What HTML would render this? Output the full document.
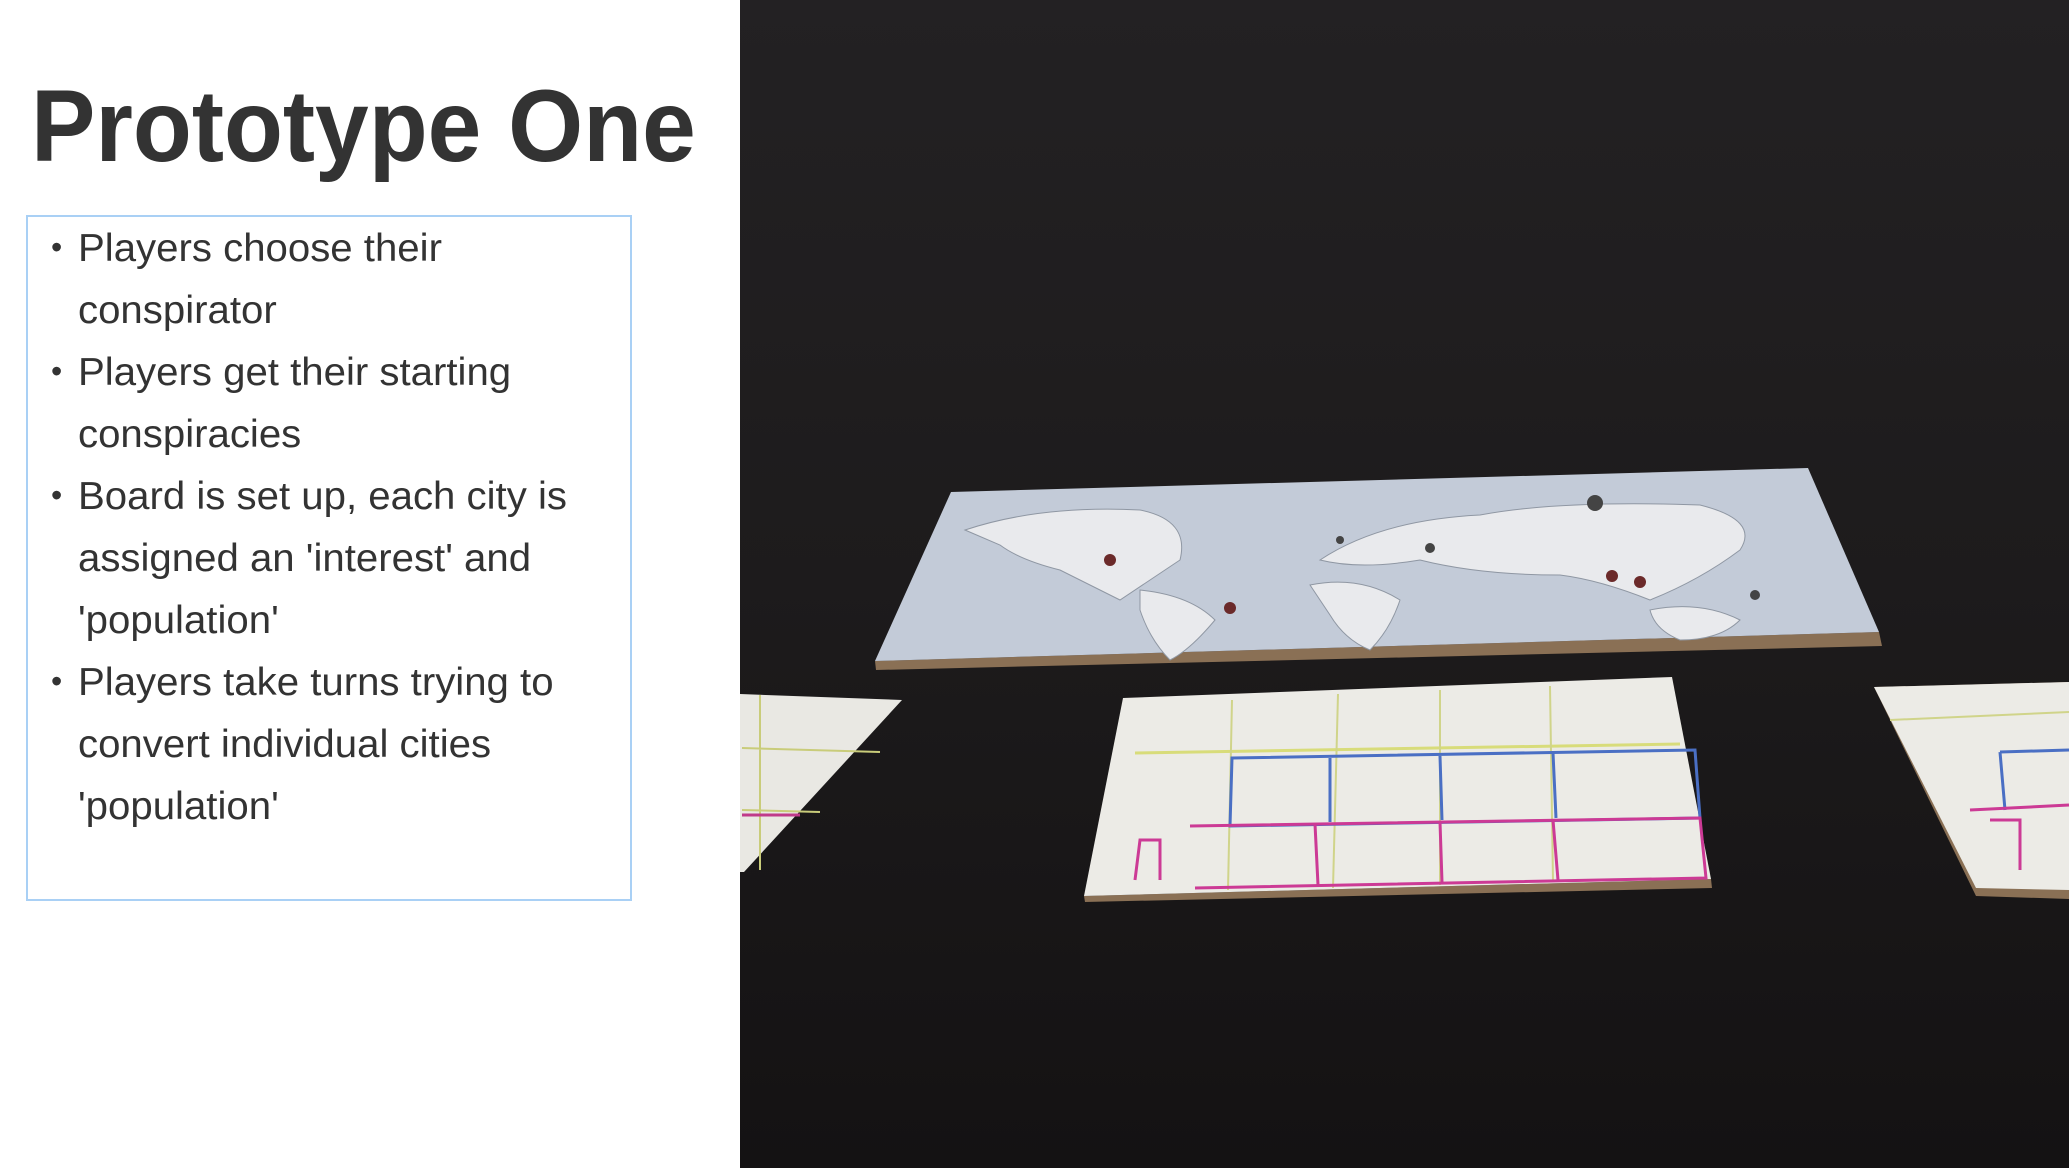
<!DOCTYPE html>
<html><head><meta charset="utf-8"><style>
html,body{margin:0;padding:0;width:2072px;height:1168px;overflow:hidden;background:#fff;font-family:"Liberation Sans",Arial,sans-serif;}
.title{position:absolute;left:31px;top:66px;font-size:102px;font-weight:bold;color:#333;line-height:120px;white-space:nowrap;transform-origin:0 0;transform:scaleX(0.946);}
.box{position:absolute;left:26px;top:215px;width:606px;height:686px;border:2px solid #a9d0f5;box-sizing:border-box;}
.txt{position:absolute;left:78px;top:0;color:#333;font-size:39px;line-height:62px;white-space:nowrap;transform-origin:0 0;transform:scaleX(1.03);}
.b{position:absolute;left:51px;color:#333;font-size:32px;}
.photo{position:absolute;left:740px;top:0;width:1332px;height:1168px;}
</style></head><body>
<div class="title">Prototype One</div>
<div class="box"></div>
<div class="txt" style="top:218px">Players choose their<br>conspirator<br>Players get their starting<br>conspiracies<br>Board is set up, each city is<br>assigned an 'interest' and<br>'population'<br>Players take turns trying to<br>convert individual cities<br>'population'</div>
<div class="b" style="top:229px">•</div>
<div class="b" style="top:353px">•</div>
<div class="b" style="top:477px">•</div>
<div class="b" style="top:663px">•</div>
<svg class="photo" viewBox="740 0 1332 1168" xmlns="http://www.w3.org/2000/svg">
<defs><linearGradient id="bg" x1="0" y1="0" x2="0" y2="1"><stop offset="0" stop-color="#232123"/><stop offset="0.5" stop-color="#1d1b1c"/><stop offset="1" stop-color="#141213"/></linearGradient></defs>
<rect x="740" y="0" width="1332" height="1168" fill="url(#bg)"/>
<rect x="2069" y="0" width="3" height="1168" fill="#fff"/>
<polygon points="875,661 1879,632 1882,646 876,670" fill="#8a7055"/>
<polygon points="951,492 1808,468 1879,632 875,661" fill="#c3cbd8"/>
<g fill="#e9eaed" stroke="#8f97a3" stroke-width="1">
<path d="M965,530 Q1040,505 1140,510 Q1190,520 1180,560 Q1150,580 1120,600 Q1090,585 1060,570 Q1020,560 1000,545 Z"/>
<path d="M1140,590 Q1190,595 1215,620 Q1190,650 1170,660 Q1150,640 1140,610 Z"/>
<path d="M1320,560 Q1380,520 1480,515 Q1560,500 1700,505 Q1760,520 1740,550 Q1700,580 1650,600 Q1600,580 1560,575 Q1480,575 1420,560 Q1360,570 1320,560 Z"/>
<path d="M1310,585 Q1360,575 1400,600 Q1390,630 1370,650 Q1345,640 1330,615 Z"/>
<path d="M1650,610 Q1700,600 1740,620 Q1720,640 1680,640 Q1655,630 1650,610 Z"/>
</g>
<g fill="#6b2a2a"><circle cx="1110" cy="560" r="6"/><circle cx="1230" cy="608" r="6"/><circle cx="1612" cy="576" r="6"/><circle cx="1640" cy="582" r="6"/></g>
<g fill="#444"><circle cx="1595" cy="503" r="8"/><circle cx="1755" cy="595" r="5"/><circle cx="1430" cy="548" r="5"/><circle cx="1340" cy="540" r="4"/></g>
<polygon points="740,694 902,700 744,872 740,872" fill="#e9e8e3"/>
<path d="M760,695 L760,870 M742,748 L880,752 M742,810 L820,812" stroke="#c9cc7a" stroke-width="2" fill="none"/>
<path d="M742,815 L800,815" stroke="#c03a8a" stroke-width="3"/>
<polygon points="1084,896 1711,879 1712,888 1085,902" fill="#8a7055"/>
<polygon points="1123,698 1672,677 1711,879 1084,896" fill="#ecebe6"/>
<g fill="none" stroke-width="3">
<path d="M1135,753 L1680,744" stroke="#d8dc7a"/>
<path d="M1232,700 L1228,890 M1338,694 L1333,888 M1440,690 L1440,885 M1550,686 L1553,882" stroke="#d0d48a" stroke-width="2"/>
<path d="M1232,758 L1695,750 L1700,818 L1230,826 Z" stroke="#4a6fc4"/>
<path d="M1330,758 L1330,822 M1440,756 L1442,820 M1553,753 L1556,818" stroke="#4a6fc4"/>
<path d="M1190,826 L1700,818 L1706,878 L1195,888" stroke="#cc3a95"/>
<path d="M1315,824 L1318,885 M1440,822 L1442,882 M1553,820 L1558,880" stroke="#cc3a95"/>
<path d="M1135,880 L1140,840 L1160,840 L1160,880" stroke="#cc3a95"/>
</g>
<polygon points="1874,687 2069,682 2069,899 1976,896" fill="#8a7055"/>
<polygon points="1874,687 2069,682 2069,890 1976,888" fill="#ecebe6"/>
<path d="M1890,720 L2069,712" stroke="#d0d48a" stroke-width="2"/>
<path d="M2000,752 L2069,750 M2000,752 L2005,810" stroke="#4a6fc4" stroke-width="3" fill="none"/>
<path d="M1970,810 L2069,805 M1990,820 L2020,820 L2020,870" stroke="#cc3a95" stroke-width="3" fill="none"/>
</svg>
</body></html>
